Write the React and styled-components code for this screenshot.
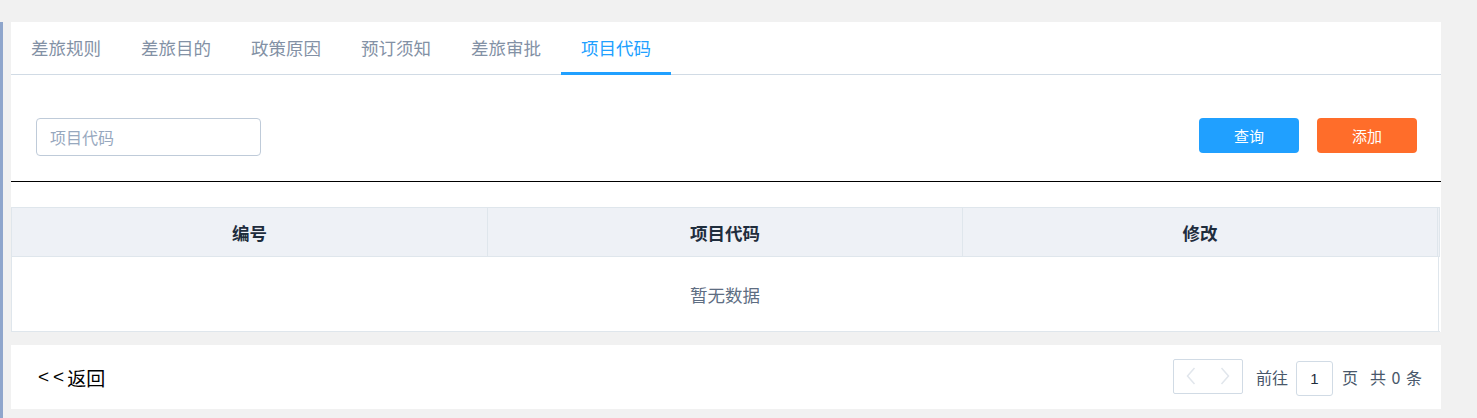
import React from "react";
import styled, { createGlobalStyle } from "styled-components";

const Global = createGlobalStyle`
  html, body { margin: 0; padding: 0; background: #f1f1f1; }
  body { font-family: "Liberation Sans", "Noto Sans CJK SC", sans-serif; }
  * { box-sizing: border-box; }
`;

const Page = styled.div`
  display: flex;
  width: 1477px;
  height: 418px;
  overflow: hidden;
`;

const SideStrip = styled.div`
  width: 3px;
  margin-top: 22px;
  background: #8fa6cc;
  flex: none;
`;

const Main = styled.div`
  margin-left: 8px;
  padding-top: 22px;
  width: 1430px;
  display: flex;
  flex-direction: column;
`;

const Card = styled.div`
  background: #fff;
`;

const TabBar = styled.div`
  display: flex;
  height: 53px;
  border-bottom: 1px solid #d1dbe5;
`;

const Tab = styled.div`
  width: 110px;
  height: 53px;
  margin-bottom: -1px;
  padding-left: 20px;
  padding-top: 1px;
  display: flex;
  align-items: center;
  font-size: 17.5px;
  white-space: nowrap;
  color: ${(p) => (p.$active ? "#20a0ff" : "#8391a5")};
  border-bottom: 3px solid ${(p) => (p.$active ? "#20a0ff" : "transparent")};
  font-family: "Noto Sans CJK SC", sans-serif;
`;

const Toolbar = styled.div`
  display: flex;
  justify-content: space-between;
  align-items: flex-start;
  padding: 43px 24px 0 25px;
  height: 107px;
  border-bottom: 1px solid #000;
`;

const SearchInput = styled.input`
  width: 225px;
  height: 38px;
  border: 1px solid #bfcbd9;
  border-radius: 4px;
  padding: 0 13px;
  font-size: 16px;
  font-family: "Noto Sans CJK SC", sans-serif;
  color: #1f2d3d;
  outline: none;
  &::placeholder { color: #97a8be; }
`;

const Buttons = styled.div`
  display: flex;
  gap: 18px;
`;

const Button = styled.button`
  width: 100px;
  height: 35px;
  border: none;
  border-radius: 4px;
  background: ${(p) => p.$bg};
  color: #fff;
  font-size: 15px;
  font-family: "Noto Sans CJK SC", sans-serif;
  padding: 0;
  cursor: pointer;
`;

const TableWrap = styled.div`
  margin-top: 25px;
  border: 1px solid #dfe6ec;
  border-right: none;
  width: 1429px;
`;

const HeadRow = styled.div`
  display: grid;
  grid-template-columns: 476px 475px 475px 1fr;
  height: 49px;
  background: #eef1f6;
  border-bottom: 1px solid #dfe6ec;
`;

const HeadCell = styled.div`
  display: flex;
  align-items: center;
  justify-content: center;
  border-right: 1px solid #dfe6ec;
  font-size: 17.5px;
  font-weight: bold;
  color: #1f2d3d;
  font-family: "Noto Sans CJK SC", sans-serif;
`;

const EmptyRow = styled.div`
  height: 74px;
  display: flex;
  align-items: center;
  justify-content: center;
  border-right: 1px solid #dfe6ec;
  margin-right: 1px;
  padding-top: 1px;
  font-size: 17.5px;
  color: #5e6d82;
  font-family: "Noto Sans CJK SC", sans-serif;
`;

const Footer = styled.div`
  margin-top: 13px;
  height: 64px;
  background: #fff;
  display: flex;
  align-items: center;
  justify-content: space-between;
  padding: 0 19px 0 27px;
`;

const BackLink = styled.a`
  font-size: 19px;
  color: #000;
  font-family: "Noto Sans CJK SC", sans-serif;
  text-decoration: none;
  display: flex;
  align-items: center;
`;

const Arrows = styled.span`
  letter-spacing: 4px;
  font-family: "Liberation Sans", sans-serif;
  font-size: 19px;
  margin-right: -1px;
`;

const Pager = styled.div`
  display: flex;
  align-items: center;
  font-size: 16px;
  color: #48576a;
  font-family: "Noto Sans CJK SC", sans-serif;
`;

const NavBox = styled.div`
  display: flex;
  width: 70px;
  height: 35px;
  border: 1px solid #d1dbe5;
  border-radius: 2px;
  margin-right: 13px;
  margin-top: -2px;
`;

const NavBtn = styled.span`
  flex: 1;
  display: flex;
  align-items: center;
  justify-content: center;
`;

const PageInput = styled.input`
  width: 37px;
  height: 35px;
  border: 1px solid #d1dbe5;
  border-radius: 3px;
  text-align: center;
  font-size: 15px;
  color: #1f2d3d;
  margin: 2px 9px 0 8px;
  padding: 0;
  font-family: "Liberation Sans", sans-serif;
  outline: none;
`;

const Total = styled.span`
  margin-left: ${(p) => p.$ml || 0}px;
  word-spacing: 2px;
`;

const Chevron = ({ dir }) => (
  <svg width="10" height="18" viewBox="0 0 10 18">
    <path
      d={dir === "left" ? "M8.5 1 L1.5 9 L8.5 17" : "M1.5 1 L8.5 9 L1.5 17"}
      fill="none"
      stroke="#e1e6ec"
      strokeWidth="1.5"
    />
  </svg>
);

const tabs = ["差旅规则", "差旅目的", "政策原因", "预订须知", "差旅审批", "项目代码"];

export default function App() {
  return (
    <>
      <Global />
      <Page>
        <SideStrip />
        <Main>
          <Card>
            <TabBar>
              {tabs.map((t, i) => (
                <Tab key={t} $active={i === 5}>
                  {t}
                </Tab>
              ))}
            </TabBar>
            <Toolbar>
              <SearchInput placeholder="项目代码" />
              <Buttons>
                <Button $bg="#20a0ff">查询</Button>
                <Button $bg="#ff6d2a">添加</Button>
              </Buttons>
            </Toolbar>
            <TableWrap>
              <HeadRow>
                <HeadCell>编号</HeadCell>
                <HeadCell>项目代码</HeadCell>
                <HeadCell>修改</HeadCell>
                <HeadCell />
              </HeadRow>
              <EmptyRow>暂无数据</EmptyRow>
            </TableWrap>
          </Card>
          <Footer>
            <BackLink href="#">
              <Arrows>&lt;&lt;</Arrows>返回
            </BackLink>
            <Pager>
              <NavBox>
                <NavBtn>
                  <Chevron dir="left" />
                </NavBtn>
                <NavBtn>
                  <Chevron dir="right" />
                </NavBtn>
              </NavBox>
              <span>前往</span>
              <PageInput defaultValue="1" />
              <span>页</span>
              <Total $ml={12}>共 0 条</Total>
            </Pager>
          </Footer>
        </Main>
      </Page>
    </>
  );
}
